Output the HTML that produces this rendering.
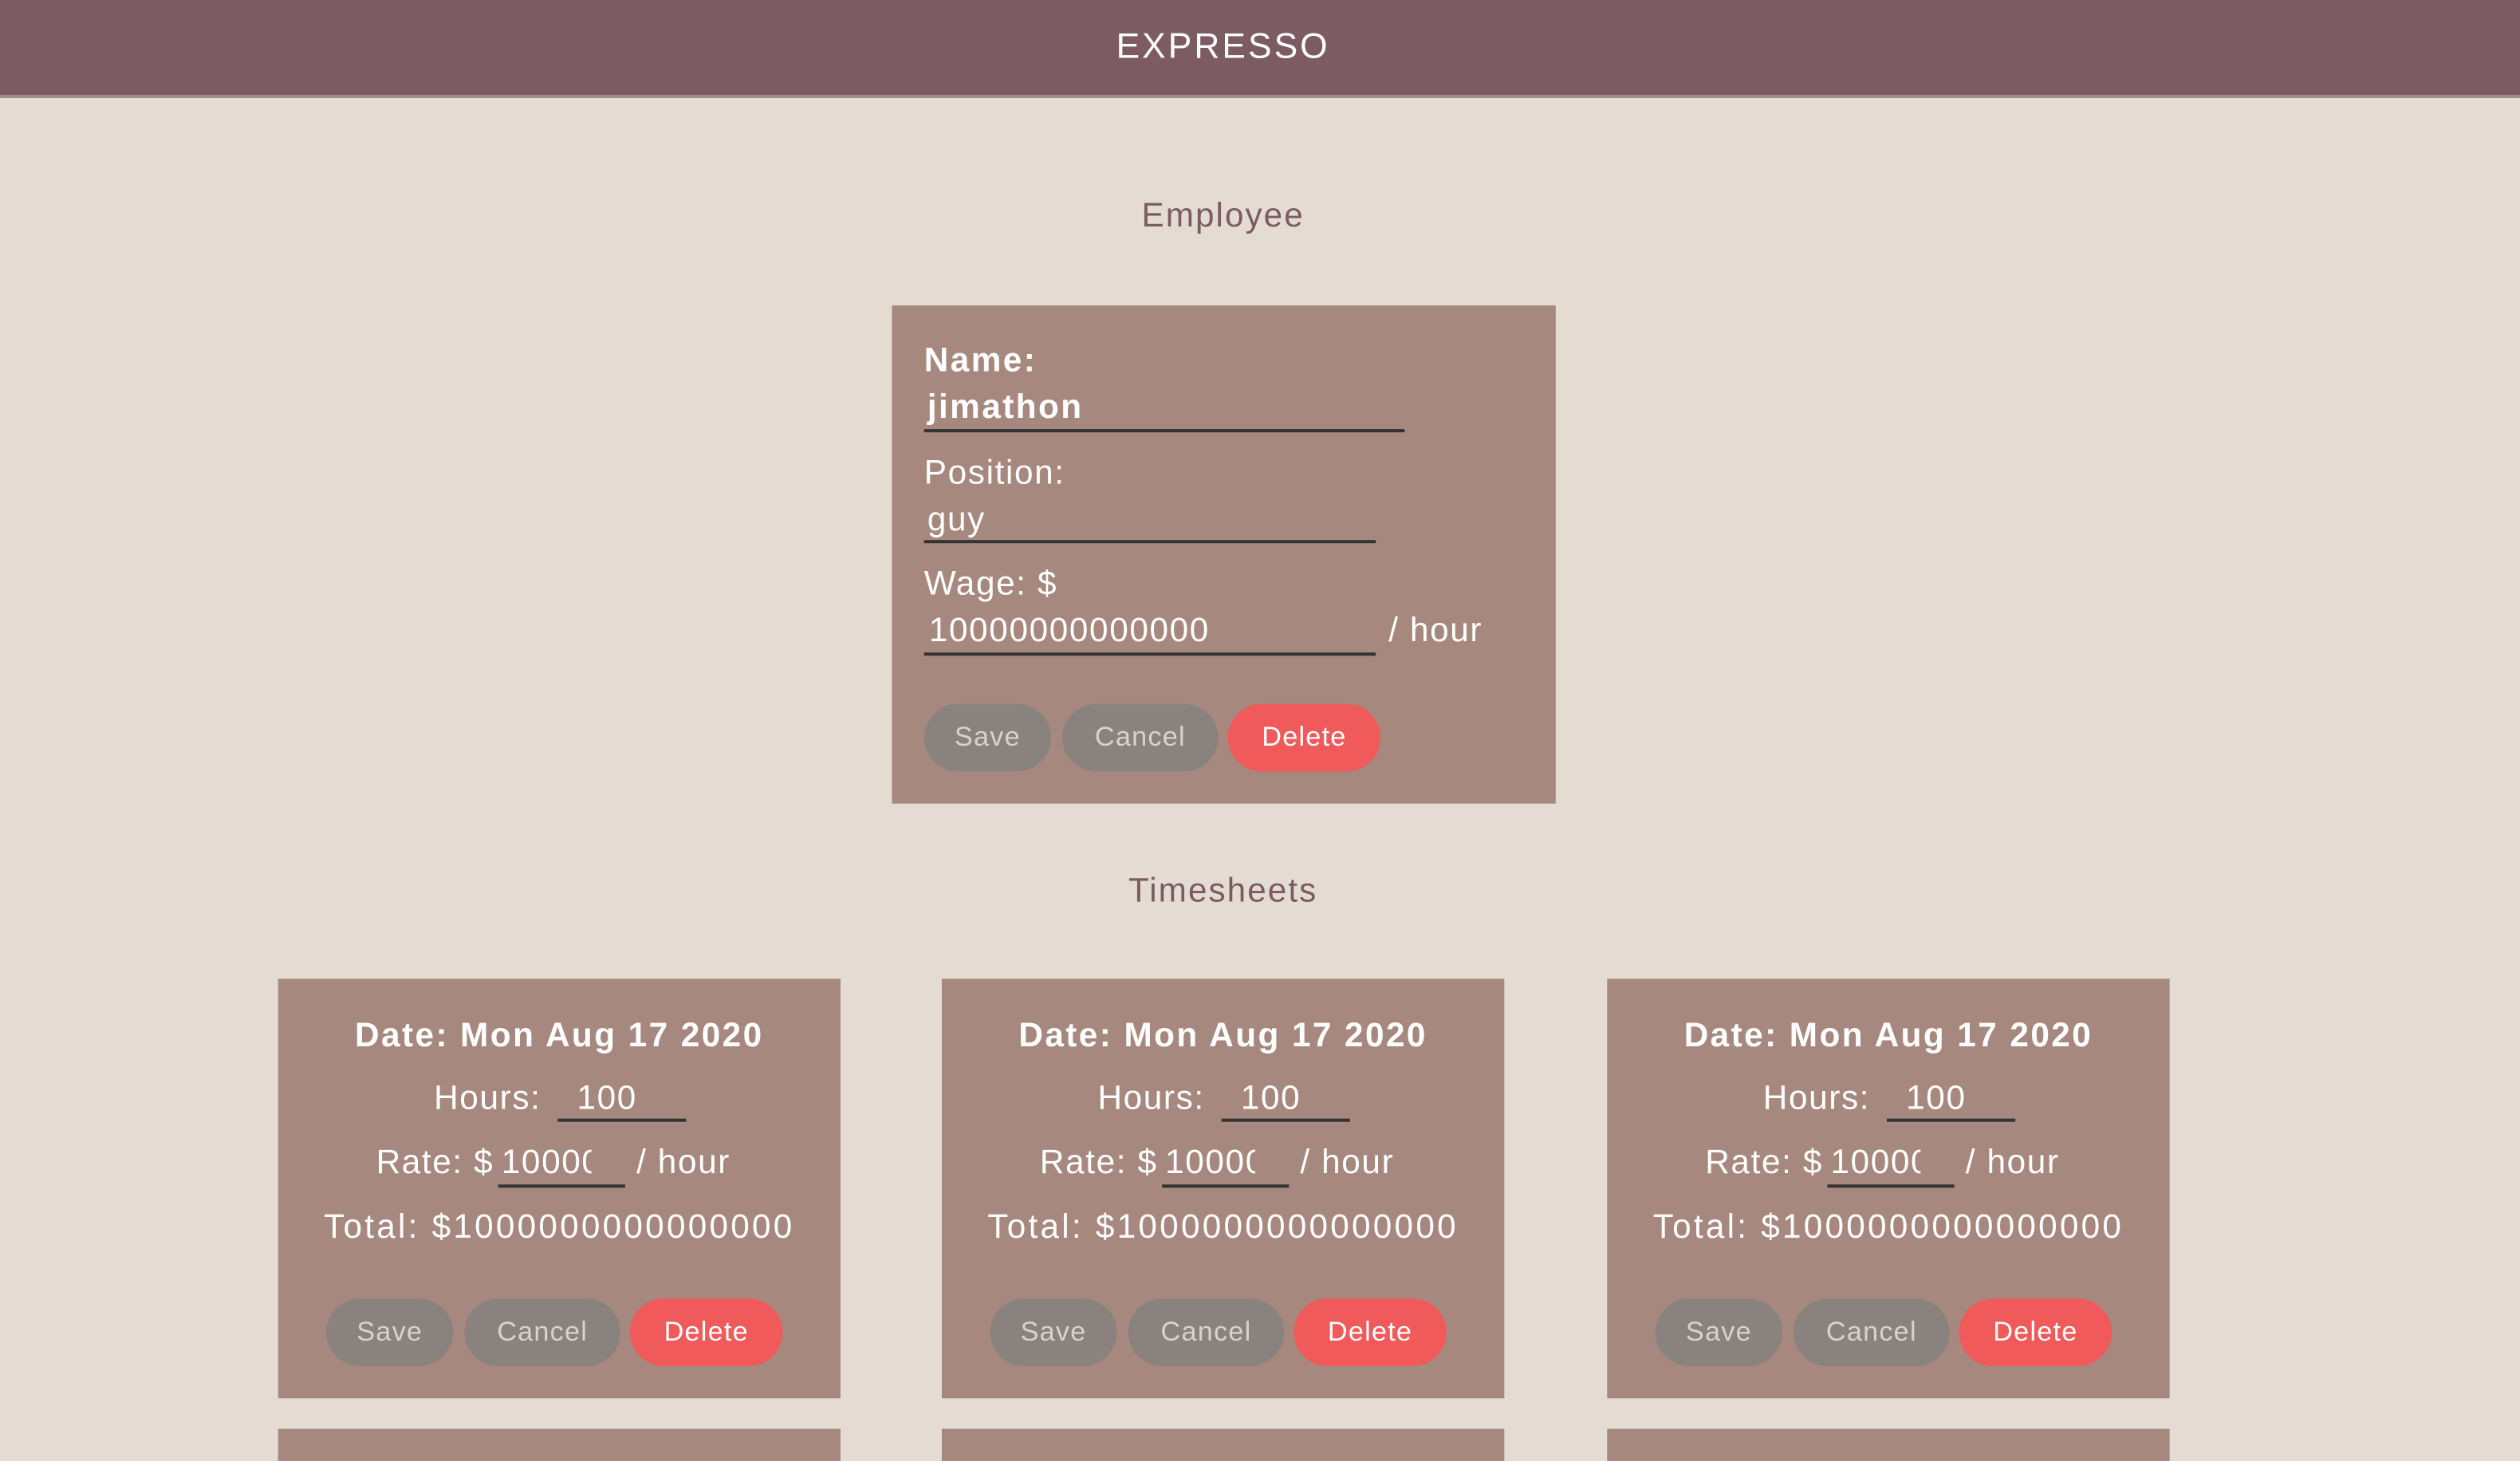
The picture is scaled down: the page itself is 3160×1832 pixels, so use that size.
<!DOCTYPE html>
<html><head><meta charset="utf-8"><style>
html,body{margin:0;padding:0;background:#e4dcd3;overflow:hidden;width:3160px;height:1797px}
#w{position:absolute;left:0;top:0;width:1568px;height:892px;transform:scale(2.01531);transform-origin:0 0;font-family:"Liberation Sans",sans-serif;}
.a{position:absolute}
.hdr{left:0;top:0;width:1568px;height:59px;background:#7d5b62;border-bottom:2px solid #9a9090}
.logo{left:0;width:1522px;top:16px;text-align:center;color:#fff;font-size:22px;letter-spacing:1.5px}
.ttl{left:0;width:1522px;text-align:center;color:#7d5b62;font-size:21px;letter-spacing:1px}
.card{background:#a6887e}
.t{color:#fff;font-size:21px;white-space:nowrap;letter-spacing:0.8px}
.b{font-weight:bold;letter-spacing:1.2px}
.ln{height:2px;background:#333}
.btn{height:42px;border-radius:21px;background:#8a827e;color:#d8d2cd;font-size:17px;text-align:center;line-height:42px;letter-spacing:0.6px}
.del{background:#f05a5a;color:#fff}
</style></head><body><div id="w">
<div class="a hdr"></div>
<div class="a logo">EXPRESSO</div>
<div class="a ttl" style="top:123px">Employee</div>
<div class="a card" style="left:555px;top:190px;width:413px;height:310px"></div>
<div class="a t b" style="left:575px;top:213px">Name:</div>
<div class="a t b" style="left:577px;top:242px">jimathon</div>
<div class="a ln" style="left:575px;top:267px;width:299px"></div>
<div class="a t" style="left:575px;top:283px">Position:</div>
<div class="a t" style="left:577px;top:312px">guy</div>
<div class="a ln" style="left:575px;top:336px;width:281px"></div>
<div class="a t" style="left:575px;top:352px">Wage: $</div>
<div class="a t" style="left:578px;top:381px">10000000000000</div>
<div class="a ln" style="left:575px;top:406px;width:281px"></div>
<div class="a t" style="left:864px;top:381px">/ hour</div>
<div class="a btn" style="left:575px;top:438px;width:79px">Save</div>
<div class="a btn" style="left:661px;top:438px;width:97px">Cancel</div>
<div class="a btn del" style="left:764px;top:438px;width:95px">Delete</div>
<div class="a ttl" style="top:543px">Timesheets</div>

<div id="cards"></div>
<script>
var h='';[173,586,1000].forEach(function(x){
h+='<div class="a card" style="left:'+x+'px;top:609px;width:350px;height:261px"></div>';
h+='<div class="a card" style="left:'+x+'px;top:889px;width:350px;height:20px"></div>';
h+='<div class="a t b" style="left:'+x+'px;width:350px;text-align:center;top:633px">Date: Mon Aug 17 2020</div>';
h+='<div class="a t" style="left:'+(x+97)+'px;top:672px">Hours:</div>';
h+='<div class="a t" style="left:'+(x+186)+'px;top:672px">100</div>';
h+='<div class="a ln" style="left:'+(x+174)+'px;top:696px;width:80px"></div>';
h+='<div class="a t" style="left:'+(x+61)+'px;top:712px">Rate: $</div>';
h+='<div class="a t" style="left:'+(x+139)+'px;top:712px;width:56px;overflow:hidden">10000</div>';
h+='<div class="a ln" style="left:'+(x+137)+'px;top:737px;width:79px"></div>';
h+='<div class="a t" style="left:'+(x+223)+'px;top:712px">/ hour</div>';
h+='<div class="a t" style="left:'+x+'px;width:350px;text-align:center;top:752px;letter-spacing:1.6px">Total: $1000000000000000</div>';
h+='<div class="a btn" style="left:'+(x+30)+'px;top:808px;width:79px">Save</div>';
h+='<div class="a btn" style="left:'+(x+116)+'px;top:808px;width:97px">Cancel</div>';
h+='<div class="a btn del" style="left:'+(x+219)+'px;top:808px;width:95px">Delete</div>';
});document.getElementById('cards').innerHTML=h;
</script>
</div></body></html>
